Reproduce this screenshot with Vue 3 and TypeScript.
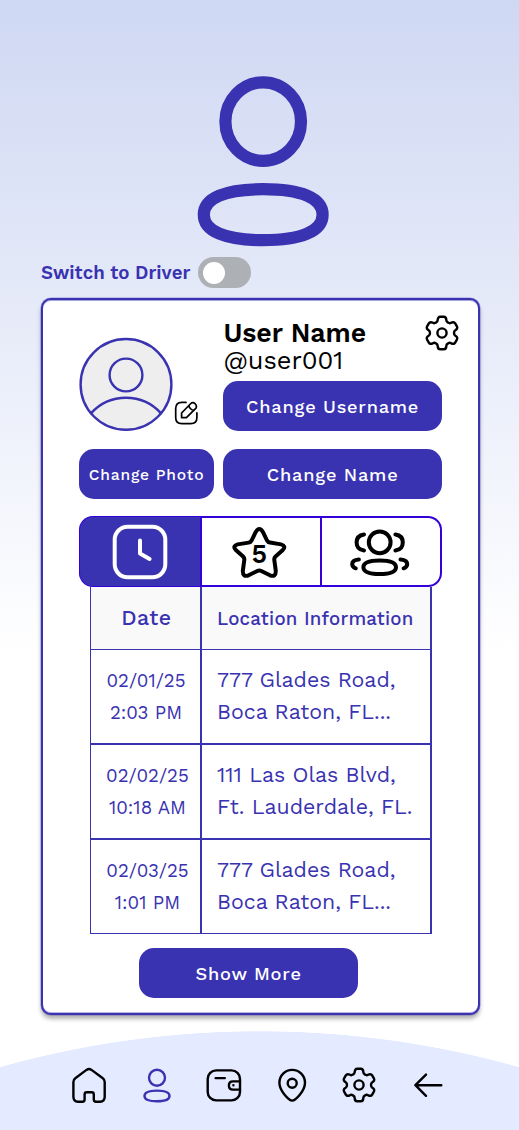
<template>
  <div class="page">
    <header class="hero">
      <svg class="hero-icon" viewBox="0 0 132 171" fill="none" stroke="currentColor" stroke-width="12.2">
        <ellipse cx="66.2" cy="45.6" rx="37.8" ry="39.3" />
        <path d="M66.2 113.2C104 113.2 125.6 122 125.6 138.7S104 164.2 66.2 164.2 6.8 155.4 6.8 138.7 28.4 113.2 66.2 113.2Z" />
      </svg>
    </header>

    <div class="switch-row">
      <span class="switch-label">Switch to Driver</span>
      <button class="toggle" :class="{ on: isDriver }" aria-label="Switch to Driver" @click="isDriver = !isDriver">
        <span class="knob"></span>
      </button>
    </div>

    <main class="card">
      <section class="profile">
        <div class="photo">
          <svg class="avatar" viewBox="0 0 94 94" stroke="currentColor" stroke-width="2.4">
            <circle cx="47" cy="47.4" r="45.4" fill="#eee" />
            <circle cx="47" cy="38" r="16.4" fill="none" />
            <path d="M12 76.4C21 66.4 33 60.8 47 60.8S73 66.4 82 76.4" fill="none" />
          </svg>
          <svg class="edit" viewBox="-0.4 0 24 24" fill="none" stroke="currentColor" stroke-width="1.7" stroke-linecap="round" stroke-linejoin="round">
            <path d="M11.6 1.4H7.5Q1.3 1.4 1.3 7.6V16.4Q1.3 22.6 7.5 22.6H16.3Q22.5 22.6 22.5 16.4V11.8" />
            <path d="M7.2 16.6V12L16.4 2.5Q18.4.6 20.6 2.6T21.6 7.2L12 16.6ZM14.4 4.6Q15.4 8.6 19.6 9.4" />
          </svg>
        </div>
        <div class="identity">
          <h1>User Name</h1>
          <p>@user001</p>
          <button class="btn">Change Username</button>
        </div>
        <svg class="settings" viewBox="0 0 36 36" fill="none" stroke="currentColor" stroke-width="2.4" stroke-linejoin="round">
          <path :d="gearPath" />
          <circle cx="18" cy="18" r="4.6" />
        </svg>
      </section>

      <section class="actions">
        <button class="btn btn-photo">Change Photo</button>
        <button class="btn">Change Name</button>
      </section>

      <div class="tabs">
        <button class="tab" :class="{ active: tab === 'history' }" aria-label="History" @click="tab = 'history'">
          <svg width="56" height="56" viewBox="0 0 56 56" fill="none" stroke="currentColor" stroke-width="4" stroke-linecap="round" stroke-linejoin="round">
            <rect x="2.7" y="2.7" width="50.6" height="50.6" rx="13" />
            <path d="M28 16.5V29.5L37.6 35" />
          </svg>
        </button>
        <button class="tab tab-middle" :class="{ active: tab === 'rating' }" aria-label="Rating" @click="tab = 'rating'">
          <svg width="55" height="53" viewBox="0 0 55 53" fill="none" stroke="currentColor" stroke-width="4" stroke-linejoin="round">
            <path d="M23.6 6.2Q27.3 0 31 6.2L35 14.5Q36 16.3 38 16.6L49 18.4Q54.5 20 50.8 24L43.5 30.5Q42 32 42.3 34L43.8 45Q43.8 51.5 38 49.3L29.3 45Q27.3 44 25.3 45L16.6 49.3Q10.8 51.5 10.8 45L12.3 34Q12.6 32 11.1 30.5L3.8 24Q.1 20 5.6 18.4L16.6 16.6Q18.6 16.3 19.6 14.5Z" />
            <text x="27.2" y="37.2" text-anchor="middle" class="rating">{{ rating }}</text>
          </svg>
        </button>
        <button class="tab tab-friends" :class="{ active: tab === 'friends' }" aria-label="Friends" @click="tab = 'friends'">
          <svg width="60" height="48" viewBox="0 0 60 48" fill="none" stroke="currentColor" stroke-width="4" stroke-linecap="round">
            <circle cx="29.7" cy="13.3" r="10.9" />
            <path d="M29.7 31.5C40 31.5 46 33.6 46 38.3S40 45.1 29.7 45.1 13.4 43 13.4 38.3 19.4 31.5 29.7 31.5Z" />
            <path d="M14 5.4C8.8 6.1 6.6 9.6 6.6 13.4S8.8 20.7 14 21.4M45.4 5.4C50.6 6.1 52.8 9.6 52.8 13.4S50.6 20.7 45.4 21.4" />
            <path d="M8.9 30.4C4.5 30.8 2.2 32.8 2.2 35S3.6 38.6 5.8 39.3M50.5 30.4C54.9 30.8 57.2 32.8 57.2 35S55.8 38.6 53.6 39.3" />
          </svg>
        </button>
      </div>

      <div class="table">
        <div class="row head">
          <div class="cell head-date">Date</div>
          <div class="cell head-location">Location Information</div>
        </div>
        <div v-for="trip in trips" :key="trip.date" class="row">
          <div class="cell when">
            <span>{{ trip.date }}</span>
            <span>{{ trip.time }}</span>
          </div>
          <div class="cell where">
            <span>{{ trip.street }}</span>
            <span>{{ trip.city }}</span>
          </div>
        </div>
      </div>

      <button class="btn btn-more">Show More</button>
    </main>

    <nav class="nav">
      <svg viewBox="0 0 36 36">
        <path d="M2.4 15V29.8Q2.4 34.7 7 34.7H11.5Q13.6 34.7 13.6 32.5V27.5Q13.6 25.3 15.8 25.3H20.6Q22.8 25.3 22.8 27.5V32.5Q22.8 34.7 25 34.7H29Q33.7 34.7 33.7 29.8V15Q33.7 12.5 31.8 11.2L20.5 2.9Q18 1.2 15.5 2.9L4.3 11.2Q2.4 12.5 2.4 15Z" />
      </svg>
      <svg viewBox="0 0 36 36" class="current">
        <circle cx="18" cy="10.8" r="8" />
        <path d="M18 23.6C26 23.6 30.5 25.3 30.5 29S26 34.3 18 34.3 5.5 32.6 5.5 29 10 23.6 18 23.6Z" />
      </svg>
      <svg viewBox="0 0 36 36">
        <rect x="1.7" y="3.4" width="32.3" height="30" rx="8.5" />
        <path d="M9.6 11.1H18.8M34 14.4H27Q22.9 14.4 22.9 18.5T27 22.6H34M27.4 18.1V18.2" />
      </svg>
      <svg viewBox="0 0 36 36">
        <path d="M18.2 33.6C15 33.6 5.4 23.9 5.4 15.7A12.8 12.8 0 0 1 31 15.7C31 23.9 21.4 33.6 18.2 33.6Z" />
        <circle cx="18.2" cy="16.2" r="4.5" />
      </svg>
      <svg viewBox="0 0 36 36">
        <path :d="gearPath" />
        <circle cx="18" cy="18" r="4.6" />
      </svg>
      <svg viewBox="0 0 36 36">
        <path d="M32.3 18.2H6.4M17 7.6L6.4 18.2 17 28.8" />
      </svg>
    </nav>
  </div>
</template>

<script setup lang="ts">
import { ref } from 'vue'

interface Trip {
  date: string
  time: string
  street: string
  city: string
}

const isDriver = ref(false)
const tab = ref<'history' | 'rating' | 'friends'>('history')
const rating = ref(5)

const trips = ref<Trip[]>([
  { date: '02/01/25', time: '2:03 PM', street: '777 Glades Road,', city: 'Boca Raton, FL...' },
  { date: '02/02/25', time: '10:18 AM', street: '111 Las Olas Blvd,', city: 'Ft. Lauderdale, FL.' },
  { date: '02/03/25', time: '1:01 PM', street: '777 Glades Road,', city: 'Boca Raton, FL...' }
])

// one tooth of the gear, turned six times around the centre
const tooth = [
  [-4.9, -11.0], [-4.3, -11.8], [-4.3, -12.9],
  [-4.3, -15], [-3.4, -16.2], [-1.7, -16.2],
  [-0.6, -16.2], [0.6, -16.2], [1.7, -16.2],
  [3.4, -16.2], [4.3, -15], [4.3, -12.9],
  [4.3, -11.8], [4.9, -11.0], [6.0, -10.4]
]

const turn = ([x, y]: number[], step: number) => {
  const a = (step * Math.PI) / 3
  const px = 18 + x * Math.cos(a) - y * Math.sin(a)
  const py = 18 + x * Math.sin(a) + y * Math.cos(a)
  return `${px.toFixed(2)} ${py.toFixed(2)}`
}

const gearPath =
  `M${turn([-6, -10.4], 0)}C` +
  [0, 1, 2, 3, 4, 5].map((step) => tooth.map((p) => turn(p, step)).join(' ')).join(' ') +
  'Z'
</script>

<style>
body {
  margin: 0;
}
</style>

<style scoped>
.page {
  width: 519px;
  height: 1130px;
  display: flex;
  flex-direction: column;
  overflow: hidden;
  background: linear-gradient(#cfd8f3 0, #fff 655px);
  color: #000;
  font-family: 'Work Sans', Inter, sans-serif;
}

svg {
  display: block;
  flex: none;
}

button {
  padding: 0;
  border: 0;
  font-family: inherit;
  cursor: pointer;
}

.hero {
  padding: 76px 0 0 197px;
  color: #3932b1;
}

.hero-icon {
  width: 132px;
  height: 171px;
}

.switch-row {
  display: flex;
  align-items: center;
  margin: 10px 0 0 41px;
}

.switch-label {
  width: 157px;
  padding-top: 1px;
  color: #3932b1;
  font-size: 18.67px;
  font-weight: 600;
  white-space: nowrap;
}

.toggle {
  display: flex;
  align-items: center;
  width: 53px;
  height: 31px;
  padding: 0 5px;
  box-sizing: border-box;
  border-radius: 16px;
  background: #adb0b5;
}

.toggle.on {
  justify-content: flex-end;
  background: #3932b1;
}

.knob {
  width: 22px;
  height: 22px;
  border-radius: 50%;
  background: #fff;
}

.card {
  display: flex;
  flex-direction: column;
  width: 439px;
  height: 717px;
  margin: 10px 0 0 41px;
  padding-left: 36.4px;
  box-sizing: border-box;
  border: 2px solid #3932b1;
  border-radius: 10px;
  background: #fff;
  box-shadow:
    inset 0 1px 0 rgba(57, 50, 177, 0.45),
    inset 0 -1px 0 rgba(57, 50, 177, 0.35),
    0 0 0 0.5px rgba(57, 50, 177, 0.45),
    0 4px 4px rgba(0, 0, 0, 0.3);
}

.profile {
  display: flex;
  height: 131px;
}

.photo {
  display: flex;
  align-items: flex-end;
  width: 144px;
}

.avatar {
  width: 94px;
  height: 94px;
  margin-left: -0.5px;
  color: #3932b1;
}

.edit {
  width: 24px;
  height: 24px;
  margin: 0 0 6.5px 1px;
}

.identity {
  display: flex;
  flex-direction: column;
  width: 201px;
}

.identity h1 {
  margin: 19px 0 0;
  font-size: 26.67px;
  line-height: 28px;
  font-weight: 600;
  white-space: nowrap;
}

.identity p {
  margin: 0 0 7px;
  font-size: 25.4px;
  line-height: 27px;
}

.settings {
  width: 36px;
  height: 36px;
  margin-top: 14.5px;
}

.btn {
  flex: none;
  width: 218.5px;
  height: 50px;
  border-radius: 15px;
  background: #3932b1;
  color: #fff;
  font-size: 18.2px;
  font-weight: 500;
  letter-spacing: 0.78px;
  white-space: nowrap;
}

.actions {
  display: flex;
  gap: 9.5px;
  margin-top: 18px;
}

.btn-photo {
  width: 134.5px;
  font-size: 15.6px;
  letter-spacing: 0.8px;
}

.tabs {
  display: flex;
  flex: none;
  width: 362.5px;
  height: 71px;
  margin-top: 17px;
}

.tab {
  display: flex;
  align-items: center;
  justify-content: center;
  width: 120.5px;
  box-sizing: border-box;
  border: 1.5px solid #3300d9;
  background: #fff;
  color: #000;
}

.tab:first-child {
  border-right: 0;
  border-radius: 14px 0 0 14px;
}

.tab-middle {
  width: 122px;
  border-width: 2px;
}

.tab-middle svg {
  margin: 2px 3px 0 0;
}

.tab-friends {
  width: 120px;
  border-width: 2px;
  border-left-width: 0;
  border-radius: 0 14px 14px 0;
}

.tab-friends svg {
  margin: 3px 2px 0 0;
}

.tab.active {
  background: #3932b1;
  color: #fff;
}

.rating {
  fill: currentColor;
  stroke: none;
  font-size: 26.67px;
  font-weight: 600;
}

.table {
  flex: none;
  width: 342px;
  height: 347px;
  margin-left: 10.6px;
  box-sizing: border-box;
  border: solid #3932b1;
  border-width: 0 2px 1px 1px;
  color: #3932b1;
}

.row {
  display: grid;
  grid-template-columns: 109px 1fr;
  height: 95px;
  box-sizing: border-box;
  border-top: 2px solid #3932b1;
}

.row.head {
  height: 62px;
  border-top: 0;
  background: #f9f9f9;
}

.row.head + .row {
  height: 94px;
  border-top-width: 1px;
}

.cell {
  display: flex;
  flex-direction: column;
  justify-content: center;
  line-height: 32px;
  white-space: nowrap;
}

.cell + .cell {
  padding-left: 15px;
  border-left: 2px solid #3932b1;
}

.head-date {
  align-items: center;
  padding-left: 2px;
  font-size: 21.33px;
  font-weight: 500;
  letter-spacing: 0.5px;
}

.head-location {
  padding-top: 1px;
  font-size: 18.67px;
  font-weight: 500;
  letter-spacing: 0.25px;
}

.when {
  align-items: center;
  padding-left: 4px;
  font-size: 18.67px;
}

.row.head + .row .when {
  padding-left: 1px;
}

.where {
  padding-bottom: 1px;
  font-size: 21.33px;
}

.btn-more {
  margin: 14px 0 0 60px;
}

.nav {
  display: flex;
  flex: none;
  gap: 31.5px;
  height: 99px;
  margin-top: 16px;
  padding: 36px 0 0 71px;
  box-sizing: border-box;
  background: radial-gradient(circle 957px at 259.5px 957px, #e4eaff 99.93%, transparent 100%);
}

.nav svg {
  width: 36px;
  height: 36px;
  fill: none;
  stroke: currentColor;
  stroke-width: 2.4;
  stroke-linecap: round;
  stroke-linejoin: round;
}

.nav .current {
  color: #3932b1;
}
</style>
